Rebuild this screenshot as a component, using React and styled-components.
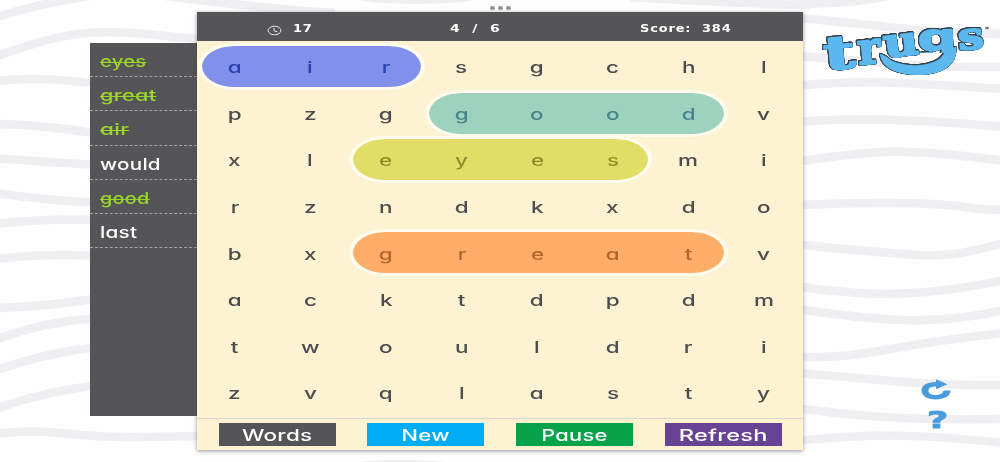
import styled, { createGlobalStyle } from "styled-components";

const GlobalStyle = createGlobalStyle`
  * {
    box-sizing: border-box;
  }
  body {
    margin: 0;
    background: #fefefe;
    font-family: Inter, "Noto Sans", sans-serif;
    font-feature-settings: "cv11" 1;
  }
`;

const Page = styled.main`
  position: relative;
  width: 1000px;
  height: 462px;
  overflow: hidden;
  display: flex;
  align-items: flex-start;
`;

const Waves = styled.svg`
  position: absolute;
  inset: 0;
  z-index: -1;
  fill: none;
  stroke: #efeef1;
  stroke-width: 8.5;
`;

const Dots = styled.div`
  position: absolute;
  top: 6px;
  left: 490px;
  display: flex;
  gap: 3px;
`;

const Dot = styled.span`
  width: 5px;
  height: 3.5px;
  border-radius: 50%;
  background: #949494;
`;

const Wide = styled.span`
  display: inline-block;
  white-space: pre;
  transform: scaleX(${(p) => p.$x || 1.45});
  transform-origin: ${(p) => p.$from || "center"};
`;

const Sidebar = styled.ul`
  width: 107px;
  height: 373px;
  margin: 43px 0 0 90px;
  padding: 0;
  list-style: none;
  background: #555456;
`;

const Word = styled.li`
  height: 34.2px;
  padding: 2px 0 0 10px;
  border-bottom: 1px dashed #a3a3a3;
  color: ${(p) => (p.$found ? "#9ad62a" : "#ffffff")};
  font-size: 15.5px;
  font-weight: 450;
  letter-spacing: 0.2px;
  line-height: 33px;
  text-decoration: ${(p) => (p.$found ? "line-through" : "none")};

  span {
    text-decoration: inherit;
    text-decoration-thickness: 1px;
  }
`;

const Panel = styled.section`
  width: 606px;
  height: 437.5px;
  margin-top: 12px;
  display: flex;
  flex-direction: column;
  background: #fdf2d2;
  box-shadow: 0 1px 4px rgba(60, 60, 70, 0.55);
`;

const Header = styled.header`
  height: 29px;
  padding: 3px 50px 0 70px;
  display: grid;
  grid-template-columns: 120px 1fr 120px;
  align-items: center;
  background: #555456;
  color: #ffffff;
  font-family: "DejaVu Sans", sans-serif;
  font-size: 10.8px;
  font-weight: 700;
  letter-spacing: 0.7px;
`;

const Timer = styled.div`
  display: flex;
  align-items: center;
  gap: 11px;

  svg {
    margin-top: 4px;
  }
`;

const Count = styled.div`
  padding-left: 63px;
`;

const Score = styled.div`
  padding-left: 7px;
`;

const Grid = styled.div`
  height: 377px;
  padding-top: 2.3px;
  display: grid;
  grid-template-columns: repeat(8, 75.6px);
  grid-template-rows: repeat(8, 46.6px);
`;

const Pill = styled.div`
  grid-row: ${(p) => p.$row};
  grid-column: ${(p) => p.$start} / span ${(p) => p.$length};
  align-self: center;
  height: 47px;
  margin: 0 -1.5px 0 1px;
  border: solid rgba(255, 253, 246, 0.72);
  border-width: 3px 4.5px;
  border-radius: 36px / 23.5px;
  background: ${(p) => p.$fill};
  background-clip: padding-box;
`;

const Letter = styled.div`
  grid-row: ${(p) => p.$row};
  grid-column: ${(p) => p.$col};
  z-index: 1;
  padding-top: 2px;
  color: ${(p) => p.$ink};
  font-size: 15.5px;
  font-weight: 450;
  line-height: 46px;
  text-align: center;
`;

const Footer = styled.footer`
  flex: 1;
  padding: 4px 21px 0 21.5px;
  display: flex;
  justify-content: space-between;
  align-items: flex-start;
  border-top: 1px solid #d9d6cc;
`;

const Button = styled.button`
  width: 117px;
  height: 23px;
  padding: 1px 0 0;
  border: 0;
  background: ${(p) => p.$fill};
  color: #ffffff;
  font: inherit;
  font-feature-settings: inherit;
  font-size: 16px;
  font-weight: 450;
  letter-spacing: 0.2px;
  line-height: 22px;
`;

const Aside = styled.aside`
  flex: 1;
  height: 462px;
  padding: 0 0 32px;
  display: flex;
  flex-direction: column;
  justify-content: space-between;
`;

const Wordmark = styled.svg`
  overflow: visible;
  margin-left: 14px;
  fill: #5bb9ef;
  font-family: "DejaVu Serif", serif;
  font-weight: 700;

  g {
    stroke: #5bb9ef;
    stroke-width: 2px;
    stroke-linejoin: round;
    filter: drop-shadow(0.8px 0 0 #35424e) drop-shadow(-0.8px 0 0 #35424e)
      drop-shadow(0 0.7px 0 #35424e) drop-shadow(0 -0.7px 0 #35424e);
  }
`;

const Tools = styled.div`
  padding-left: 117px;
  display: flex;
  flex-direction: column;
  gap: 9px;
`;

const Help = styled.div`
  width: 36px;
  height: 20px;
  color: #4a9ddd;
  font-family: "DejaVu Sans", sans-serif;
  font-size: 23px;
  font-weight: 700;
  line-height: 20px;
  text-align: center;
  -webkit-text-stroke: 0.8px #4a9ddd;
`;

const waves = [
  "M-5 18C20 9 50 2 95 -5",
  "M-5 57C25 46 65 32 105 32S165 37 200 39",
  "M-5 81C30 77 55 79 100 84",
  "M-5 124Q45 125 100 134",
  "M-5 158Q45 162 100 165",
  "M-5 193Q45 200 100 203",
  "M-5 224Q45 218 100 220",
  "M-5 259Q45 253 100 256",
  "M-5 308Q45 307 100 298",
  "M-5 340Q45 321 100 318",
  "M-5 371Q45 352 100 347",
  "M-5 409Q45 391 100 385",
  "M-5 434C40 428 55 434 95 436S150 437 200 436",
  "M165 -4Q260 8 335 13",
  "M630 -3Q720 3 810 5",
  "M795 18C860 22 910 33 1005 34",
  "M795 56C870 61 910 68 1005 67",
  "M795 86C880 78 930 85 1005 89",
  "M795 122C860 117 925 120 1005 127",
  "M795 162C880 150 900 147 1005 161",
  "M795 205C870 202 930 202 965 207S995 209 1005 209",
  "M795 244C850 250 885 253 920 255S970 251 1005 243",
  "M795 286C850 294 905 301 1005 280",
  "M795 309C860 317 920 329 1005 310",
  "M795 357C880 358 870 347 1005 333",
  "M795 373C860 377 930 387 1005 385",
  "M795 408C850 415 900 421 1005 419",
  "M795 441C870 434 910 433 1005 443",
];

const words = [
  { text: "eyes", found: true, x: 1.3 },
  { text: "great", found: true, x: 1.4 },
  { text: "air", found: true, x: 1.45 },
  { text: "would", found: false, x: 1.33 },
  { text: "good", found: true, x: 1.28 },
  { text: "last", found: false, x: 1.34 },
];

const rows = [
  "airsgchl",
  "pzggoodv",
  "xleyesmi",
  "rzndkxdo",
  "bxgreatv",
  "acktdpdm",
  "twouldri",
  "zvqlasty",
];

const found = [
  { row: 1, start: 1, length: 3, fill: "#8190eb", ink: "#2d40ae" },
  { row: 2, start: 4, length: 4, fill: "#9dd2bf", ink: "#48858a" },
  { row: 3, start: 3, length: 4, fill: "#e1dd66", ink: "#918f2c" },
  { row: 5, start: 3, length: 5, fill: "#ffae69", ink: "#b5652b" },
];

const buttons = [
  { label: "Words", fill: "#555456", x: 1.4 },
  { label: "New", fill: "#00adf2", x: 1.38 },
  { label: "Pause", fill: "#07a34b", x: 1.36 },
  { label: "Refresh", fill: "#694393", x: 1.47 },
];

const inkAt = (row, col) => {
  const hit = found.find(
    (f) => f.row === row && col >= f.start && col < f.start + f.length
  );
  return hit ? hit.ink : "#4d4c4e";
};

const ClockIcon = () => (
  <svg width="15" height="11" viewBox="0 0 15 11" fill="none" stroke="#e8e8e8">
    <ellipse cx="7.5" cy="5.5" rx="6.4" ry="4.3" />
    <path d="M7 3v2.8l3.4 1" />
  </svg>
);

const Logo = () => (
  <Wordmark width="180" height="82" viewBox="817 0 180 82">
    <defs>
      <clipPath id="bowl">
        <rect x="915" y="10" width="50" height="43" />
      </clipPath>
    </defs>
    <g>
      <text transform="translate(825 70) rotate(-5) scale(1.48 1)" fontSize="46">t</text>
      <text transform="translate(859 65) rotate(-6) scale(.98 1)" fontSize="45">r</text>
      <text transform="translate(885 58) rotate(-7) scale(1.18 1)" fontSize="41">u</text>
      <g clipPath="url(#bowl)" style={{ filter: "none" }}>
        <text
          transform="translate(918.500 51) rotate(-2) scale(1.62 1)"
          fontSize="38"
          fontFamily="Liberation Sans, sans-serif"
        >
          g
        </text>
      </g>
      <path d="M881 55C885 57 888 58 890 61C906 69 941 69 946.500 50L955.500 48C956 65 942 74 918 74C897 74 883 67 881 55Z" />
      <text transform="translate(959 50) rotate(-5) scale(1.24 1)" fontSize="37">s</text>
    </g>
    <ellipse cx="987" cy="28" rx="2" ry="1.2" fill="#777" />
  </Wordmark>
);

const ReloadIcon = () => (
  <svg width="34" height="22" viewBox="0 0 34 22" fill="#4a9ddd">
    <path d="M16 3C6 3 1.500 7 1.500 11.500C1.500 16.500 7 20.500 15.500 20.500C24 20.500 30.500 17 30.500 11.500H23.500C23 14.500 20 16 15.500 16C11 16 8.500 14.500 8.500 11.800C8.500 9 11 7.600 16 7.600Z" />
    <path d="M16 .3L27.500 5.300L16 10.300Z" />
  </svg>
);

const App = () => (
  <>
    <GlobalStyle />
    <Page>
      <Waves width="1000" height="462">
        {waves.map((d) => (
          <path key={d} d={d} />
        ))}
        <ellipse cx="417" cy="-1" rx="57" ry="5" fill="#efeef1" stroke="none" />
        <path d="M795 -2H897Q860 8 795 8Z" fill="#efeef1" stroke="none" />
        <ellipse cx="402" cy="463" rx="45" ry="3" fill="#efeef1" stroke="none" />
      </Waves>
      <Dots>
        <Dot />
        <Dot />
        <Dot />
      </Dots>
      <Sidebar>
        {words.map((w) => (
          <Word key={w.text} $found={w.found}>
            <Wide $x={w.x} $from="left">{w.text}</Wide>
          </Word>
        ))}
      </Sidebar>
      <Panel>
        <Header>
          <Timer>
            <ClockIcon />
            <Wide $x={1.2} $from="left">17</Wide>
          </Timer>
          <Count>
            <Wide $x={1.3} $from="left">4  /  6</Wide>
          </Count>
          <Score>
            <Wide $x={1.2} $from="left">Score:  384</Wide>
          </Score>
        </Header>
        <Grid>
          {found.map((f) => (
            <Pill
              key={f.row}
              $row={f.row}
              $start={f.start}
              $length={f.length}
              $fill={f.fill}
            />
          ))}
          {rows.map((row, r) =>
            [...row].map((char, c) => (
              <Letter
                key={`${r}-${c}`}
                $row={r + 1}
                $col={c + 1}
                $ink={inkAt(r + 1, c + 1)}
              >
                <Wide>{char}</Wide>
              </Letter>
            ))
          )}
        </Grid>
        <Footer>
          {buttons.map((b) => (
            <Button key={b.label} $fill={b.fill}>
              <Wide $x={b.x}>{b.label}</Wide>
            </Button>
          ))}
        </Footer>
      </Panel>
      <Aside>
        <Logo />
        <Tools>
          <ReloadIcon />
          <Help>
            <Wide $x={1.6}>?</Wide>
          </Help>
        </Tools>
      </Aside>
    </Page>
  </>
);

export default App;
